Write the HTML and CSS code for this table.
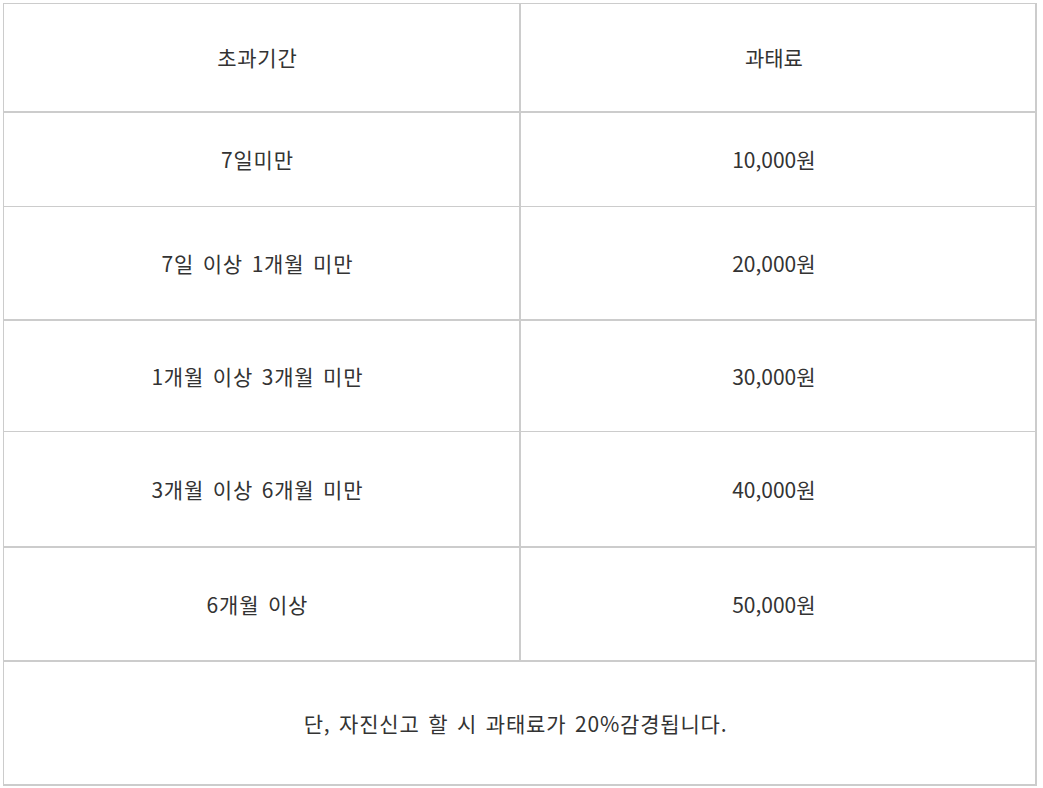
FILE: index.html
```html
<!DOCTYPE html>
<html lang="ko">
<head>
<meta charset="utf-8">
<link rel="stylesheet" href="styles.css">
</head>
<body>
<table class="fee-table">
  <tr class="row-head">
    <td class="cell">초과기간</td>
    <td class="cell amount">과태료</td>
  </tr>
  <tr class="row-1">
    <td class="cell">7일미만</td>
    <td class="cell amount">10,000원</td>
  </tr>
  <tr class="row-2">
    <td class="cell">7일 이상 1개월 미만</td>
    <td class="cell amount">20,000원</td>
  </tr>
  <tr class="row-3">
    <td class="cell">1개월 이상 3개월 미만</td>
    <td class="cell amount">30,000원</td>
  </tr>
  <tr class="row-4">
    <td class="cell">3개월 이상 6개월 미만</td>
    <td class="cell amount">40,000원</td>
  </tr>
  <tr class="row-5">
    <td class="cell">6개월 이상</td>
    <td class="cell amount">50,000원</td>
  </tr>
  <tr class="row-foot">
    <td class="cell" colspan="2">단, 자진신고 할 시 과태료가 20%감경됩니다.</td>
  </tr>
</table>
</body>
</html>
```

FILE: styles.css
```css
html, body {
  margin: 0;
  padding: 0;
  background: #fff;
}
body {
  padding: 3px 0 0 3px;
  font-family: "Noto Sans CJK KR", "Noto Sans", sans-serif;
  color: #333;
}
.fee-table {
  width: 1034px;
  border-collapse: collapse;
  table-layout: fixed;
  border: 1px solid #cccccc;
  border-right-width: 2px;
  border-bottom-width: 2px;
}
.cell {
  border: 1px solid #cccccc;
  text-align: center;
  vertical-align: middle;
  font-size: 21px;
  letter-spacing: 0.8px;
  word-spacing: 2px;
  padding: 0 8px 0 0;
}
.cell.amount { letter-spacing: 0; }
.cell:first-child { border-right-width: 2px; }
.row-head { height: 108px; }
.row-1 { height: 95px; }
.row-2 { height: 113px; }
.row-3 { height: 112px; }
.row-4 { height: 115px; }
.row-5 { height: 114px; }
.row-foot { height: 124px; }
.row-head .cell, .row-2 .cell, .row-4 .cell, .row-5 .cell { border-bottom-width: 2px; }
```
